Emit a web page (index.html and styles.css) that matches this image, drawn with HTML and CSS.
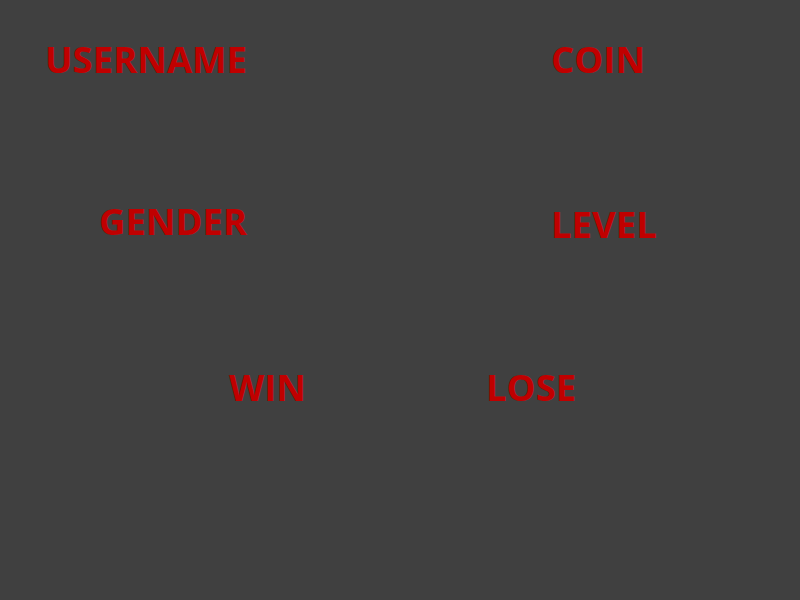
FILE: index.html
```html
<!DOCTYPE html>
<html>
<head>
<meta charset="utf-8">
<link rel="stylesheet" href="styles.css">
</head>
<body>
<main class="board">
  <div class="row row-top">
    <div class="cell username"><span class="label">USERNAME</span></div>
    <div class="cell coin"><span class="label">COIN</span></div>
  </div>
  <div class="row row-mid">
    <div class="cell gender"><span class="label">GENDER</span></div>
    <div class="cell level"><span class="label">LEVEL</span></div>
  </div>
  <div class="row row-bottom">
    <div class="cell win"><span class="label">WIN</span></div>
    <div class="cell lose"><span class="label">LOSE</span></div>
  </div>
</main>
</body>
</html>
```
FILE: styles.css
```css
html, body {
  margin: 0;
  padding: 0;
  background: #404040;
}
.board {
  width: 800px;
  height: 600px;
  box-sizing: border-box;
  padding-top: 39px;
  font-family: "Open Sans", "Noto Sans", sans-serif;
  font-weight: 700;
  font-size: 36.5px;
  line-height: 40px;
  color: #c00000;
}
.row {
  display: grid;
  grid-template-columns: 400px 400px;
  align-items: start;
}
.row-mid { margin-top: 122px; }
.row-bottom { margin-top: 123px; }
.label { white-space: nowrap; }
.username { padding-left: 45px; }
.coin { padding-left: 151px; }
.gender { padding-left: 99px; }
.level { padding-left: 151px; margin-top: 3px; }
.win { padding-left: 229px; }
.lose { padding-left: 86px; }
```
